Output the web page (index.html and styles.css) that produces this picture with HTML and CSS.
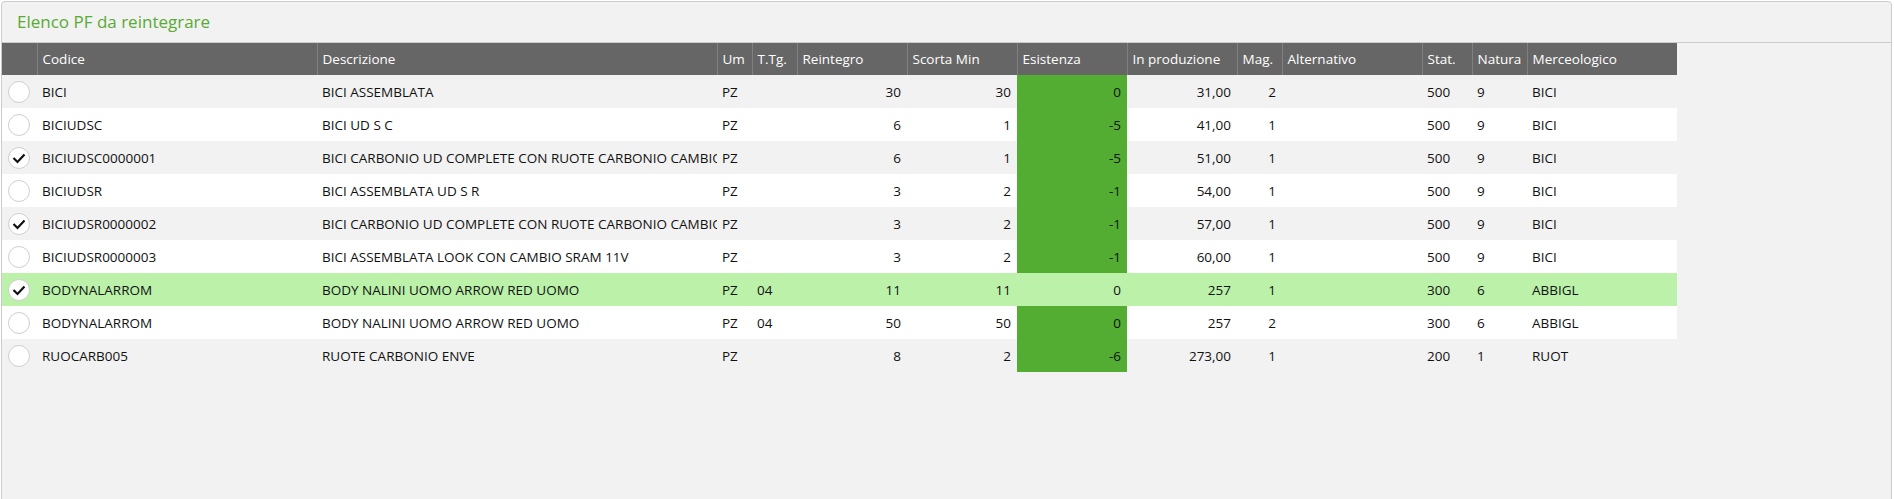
FILE: index.html
```html
<!DOCTYPE html>
<html>
<head>
<meta charset="utf-8">
<link rel="stylesheet" href="styles.css">
</head>
<body>
<div class="panel">
  <div class="panel-title">Elenco PF da reintegrare</div>
  <div class="panel-body">
    <table class="grid">
      <colgroup>
        <col class="c-chk"><col class="c-cod"><col class="c-desc"><col class="c-um"><col class="c-ttg">
        <col class="c-110"><col class="c-110"><col class="c-110"><col class="c-110">
        <col class="c-mag"><col class="c-alt"><col class="c-stat"><col class="c-nat"><col class="c-merc">
      </colgroup>
      <thead>
        <tr>
          <th></th><th>Codice</th><th>Descrizione</th><th>Um</th><th>T.Tg.</th><th>Reintegro</th><th>Scorta Min</th><th>Esistenza</th><th>In produzione</th><th>Mag.</th><th>Alternativo</th><th>Stat.</th><th>Natura</th><th>Merceologico</th>
        </tr>
      </thead>
      <tbody>
        <tr>
          <td class="chk"><span class="box"></span></td><td>BICI</td><td>BICI ASSEMBLATA</td><td>PZ</td><td></td><td class="num">30</td><td class="num">30</td><td class="num ex">0</td><td class="num">31,00</td><td class="num">2</td><td></td><td>500</td><td>9</td><td>BICI</td>
        </tr>
        <tr>
          <td class="chk"><span class="box"></span></td><td>BICIUDSC</td><td>BICI UD S C</td><td>PZ</td><td></td><td class="num">6</td><td class="num">1</td><td class="num ex">-5</td><td class="num">41,00</td><td class="num">1</td><td></td><td>500</td><td>9</td><td>BICI</td>
        </tr>
        <tr>
          <td class="chk"><span class="box on"><svg viewBox="0 0 20 20"><path d="M4.5 10 L8.5 14 L15.5 6.5"/></svg></span></td><td>BICIUDSC0000001</td><td class="desc"><span class="clip">BICI CARBONIO UD COMPLETE CON RUOTE CARBONIO CAMBIO</span></td><td>PZ</td><td></td><td class="num">6</td><td class="num">1</td><td class="num ex">-5</td><td class="num">51,00</td><td class="num">1</td><td></td><td>500</td><td>9</td><td>BICI</td>
        </tr>
        <tr>
          <td class="chk"><span class="box"></span></td><td>BICIUDSR</td><td>BICI ASSEMBLATA UD S R</td><td>PZ</td><td></td><td class="num">3</td><td class="num">2</td><td class="num ex">-1</td><td class="num">54,00</td><td class="num">1</td><td></td><td>500</td><td>9</td><td>BICI</td>
        </tr>
        <tr>
          <td class="chk"><span class="box on"><svg viewBox="0 0 20 20"><path d="M4.5 10 L8.5 14 L15.5 6.5"/></svg></span></td><td>BICIUDSR0000002</td><td class="desc"><span class="clip">BICI CARBONIO UD COMPLETE CON RUOTE CARBONIO CAMBIO</span></td><td>PZ</td><td></td><td class="num">3</td><td class="num">2</td><td class="num ex">-1</td><td class="num">57,00</td><td class="num">1</td><td></td><td>500</td><td>9</td><td>BICI</td>
        </tr>
        <tr>
          <td class="chk"><span class="box"></span></td><td>BICIUDSR0000003</td><td>BICI ASSEMBLATA LOOK CON CAMBIO SRAM 11V</td><td>PZ</td><td></td><td class="num">3</td><td class="num">2</td><td class="num ex">-1</td><td class="num">60,00</td><td class="num">1</td><td></td><td>500</td><td>9</td><td>BICI</td>
        </tr>
        <tr class="sel">
          <td class="chk"><span class="box on"><svg viewBox="0 0 20 20"><path d="M4.5 10 L8.5 14 L15.5 6.5"/></svg></span></td><td>BODYNALARROM</td><td>BODY NALINI UOMO ARROW RED UOMO</td><td>PZ</td><td>04</td><td class="num">11</td><td class="num">11</td><td class="num ex">0</td><td class="num">257</td><td class="num">1</td><td></td><td>300</td><td>6</td><td>ABBIGL</td>
        </tr>
        <tr>
          <td class="chk"><span class="box"></span></td><td>BODYNALARROM</td><td>BODY NALINI UOMO ARROW RED UOMO</td><td>PZ</td><td>04</td><td class="num">50</td><td class="num">50</td><td class="num ex">0</td><td class="num">257</td><td class="num">2</td><td></td><td>300</td><td>6</td><td>ABBIGL</td>
        </tr>
        <tr>
          <td class="chk"><span class="box"></span></td><td>RUOCARB005</td><td>RUOTE CARBONIO ENVE</td><td>PZ</td><td></td><td class="num">8</td><td class="num">2</td><td class="num ex">-6</td><td class="num">273,00</td><td class="num">1</td><td></td><td>200</td><td>1</td><td>RUOT</td>
        </tr>
      </tbody>
    </table>
  </div>
</div>
</body>
</html>
```

FILE: styles.css
```css
html, body {
  margin: 0;
  padding: 0;
  background: #ffffff;
}
body {
  font-family: "Open Sans", "Noto Sans", sans-serif;
  font-size: 13.5px;
  color: #111111;
}
.panel {
  margin: 1px 2px 0 1px;
  height: 520px;
  background: #f2f2f2;
  border: 1px solid #cccccc;
  border-radius: 4px 4px 0 0;
  box-sizing: border-box;
}
.panel-title {
  height: 41px;
  box-sizing: border-box;
  padding: 8px 0 0 15px;
  color: #58ab33;
  font-size: 17px;
  line-height: 23px;
  border-bottom: 1px solid #cccccc;
}
.panel-body {
  padding: 0;
}
.grid {
  border-collapse: collapse;
  table-layout: fixed;
  width: 1675px;
}
.c-chk { width: 35px; }
.c-cod { width: 280px; }
.c-desc { width: 400px; }
.c-um { width: 35px; }
.c-ttg { width: 45px; }
.c-110 { width: 110px; }
.c-mag { width: 45px; }
.c-alt { width: 140px; }
.c-stat { width: 50px; }
.c-nat { width: 55px; }
.c-merc { width: 150px; }
.grid th {
  height: 32px;
  padding: 0 5px;
  background: #666666;
  color: #ffffff;
  font-weight: normal;
  text-align: left;
  border-left: 1px solid #808080;
  white-space: nowrap;
  overflow: hidden;
}
.grid th:first-child {
  border-left: none;
}
.grid td {
  height: 33px;
  padding: 0 5px;
  white-space: nowrap;
  overflow: hidden;
  box-sizing: border-box;
}
.grid td.desc {
  padding-right: 0;
}
.clip {
  display: block;
  overflow: hidden;
  white-space: nowrap;
}
.grid tbody tr:nth-child(odd) {
  background: #f2f2f2;
}
.grid tbody tr:nth-child(even) {
  background: #ffffff;
}
.grid td.num {
  text-align: right;
  padding-right: 6px;
}
.grid td.ex {
  background: #52ad32;
}
.grid tbody tr.sel {
  background: #bbf1a9;
}
.grid tbody tr.sel td.ex {
  background: transparent;
}
.grid td.chk {
  padding: 0 0 0 6px;
}
.box {
  display: block;
  width: 20px;
  height: 20px;
  border: 1px solid #cfcfcf;
  border-radius: 50%;
  background: #ffffff;
}
.box svg {
  display: block;
  width: 20px;
  height: 20px;
}
.box svg path {
  fill: none;
  stroke: #111111;
  stroke-width: 2.2;
}
```
